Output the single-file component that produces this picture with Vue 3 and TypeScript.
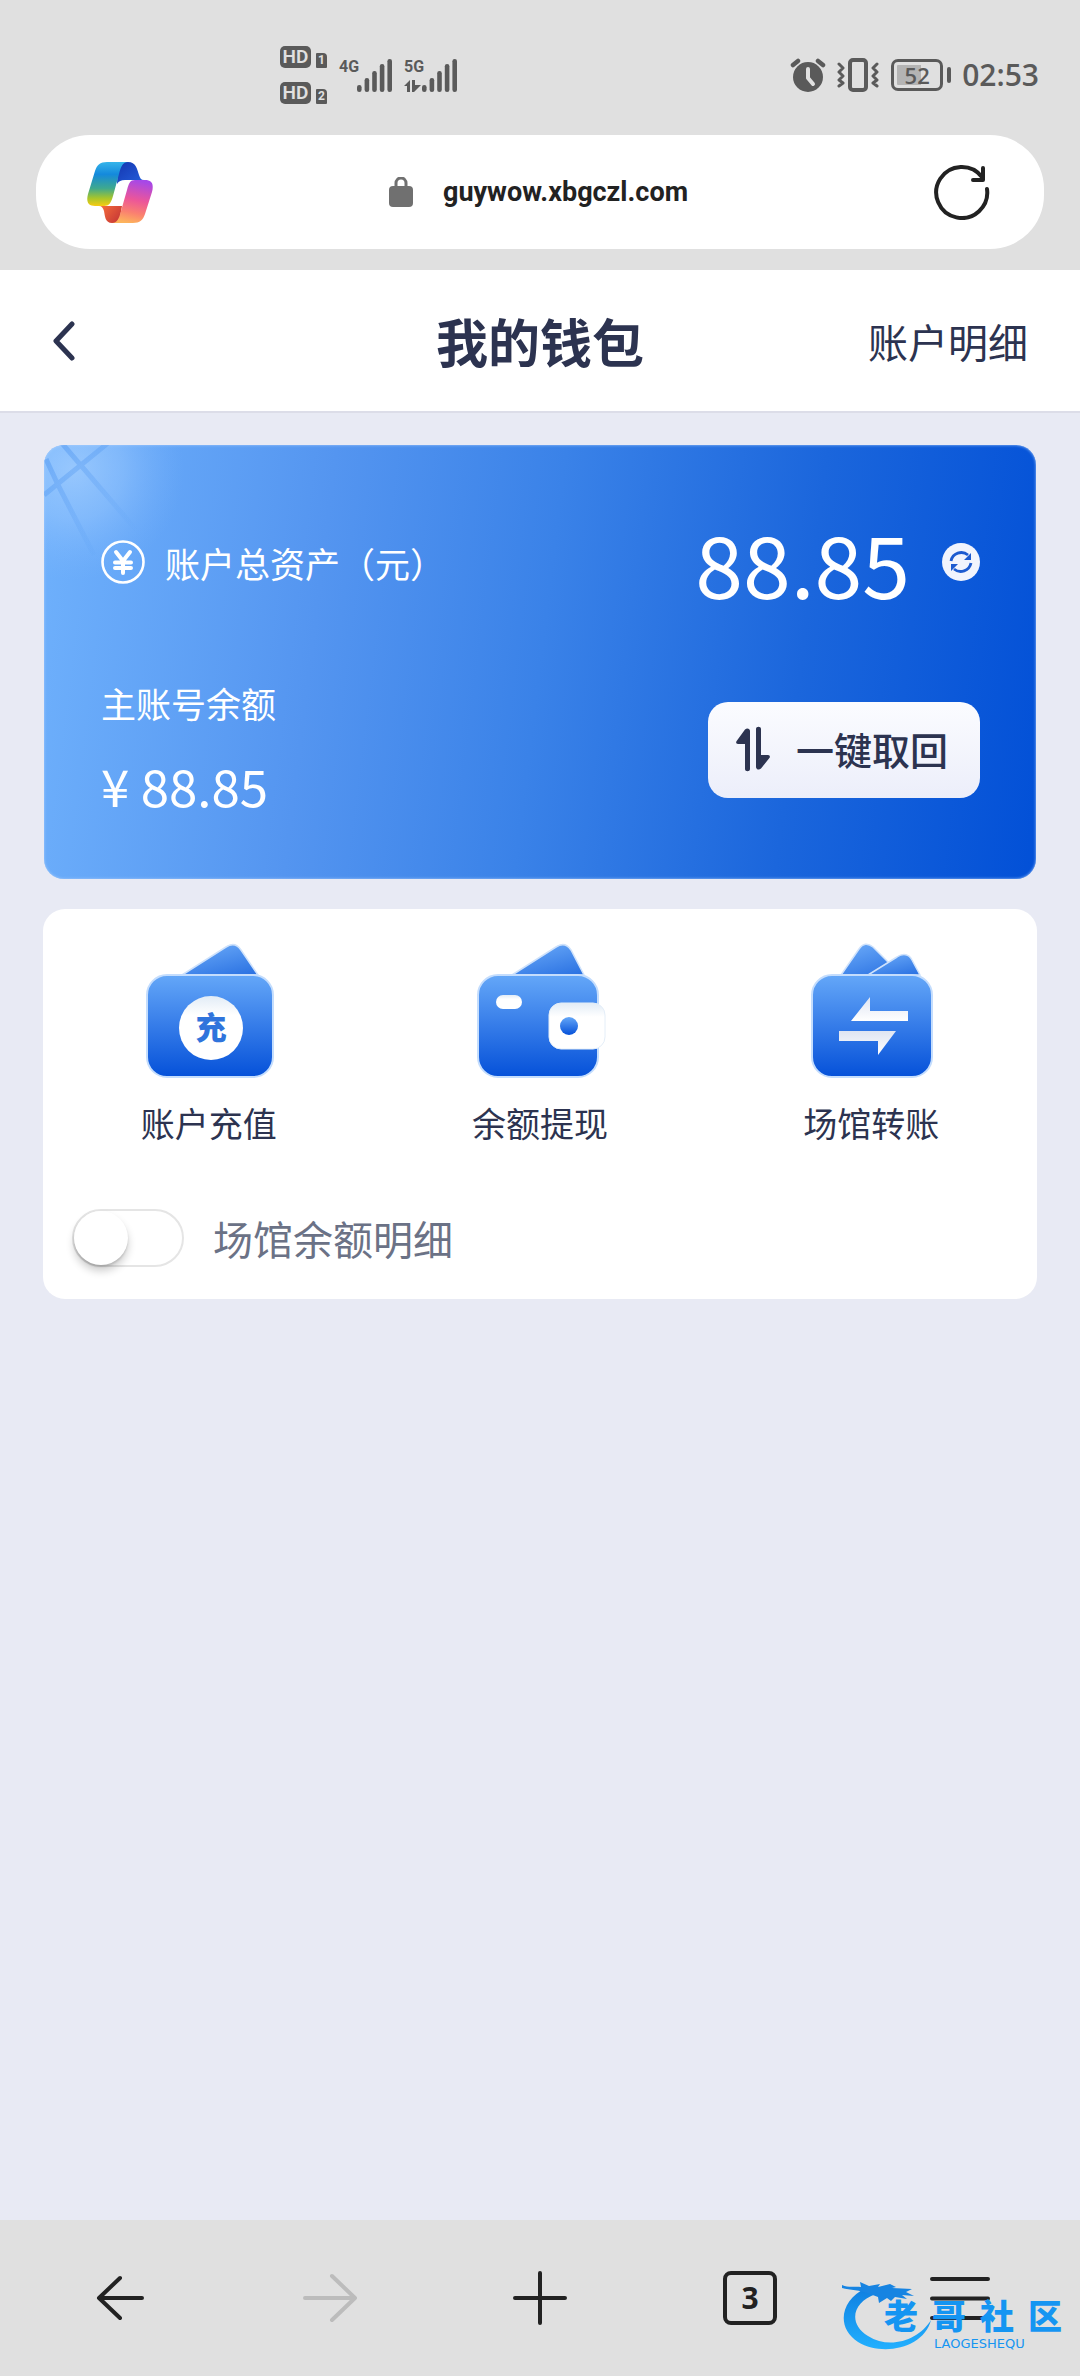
<script setup lang="ts">
import { ref } from 'vue'

interface SimCard {
  slot: number
  network: string
  data: boolean
}

const sims: SimCard[] = [
  { slot: 1, network: '4G', data: false },
  { slot: 2, network: '5G', data: true },
]

const bars = [7, 14, 21, 28, 33]
const address = ref('guywow.xbgczl.com')
const showVenues = ref(false)
const mark = ['老', '哥', '社', '区']
</script>

<template>
  <div class="screen">
    <div class="status">
      <div class="status-left">
        <div class="hd-list">
          <div v-for="sim in sims" :key="sim.slot" class="hd-row">
            <span class="hd">HD</span>
            <span class="slot">{{ sim.slot }}</span>
          </div>
        </div>
        <div v-for="sim in sims" :key="sim.network" class="signal">
          <div class="net">
            <span>{{ sim.network }}</span>
            <svg v-if="sim.data" width="17" height="12" viewBox="0 0 17 12">
              <path d="M0 6 6 0v12H3V6zM8 0h3v5h6l-7 7H8z" fill="#5a5a5a" />
            </svg>
          </div>
          <svg width="35" height="33" viewBox="0 0 35 33">
            <rect v-for="(h, i) in bars" :key="i" :x="i * 7.6" :y="33 - h" width="4.6" :height="h" rx="2.2" fill="#5a5a5a" />
          </svg>
        </div>
      </div>
      <div class="status-right">
        <svg width="36" height="34" viewBox="0 0 36 34" fill="none" stroke-linecap="round">
          <circle cx="18" cy="19" r="15" fill="#5a5a5a" />
          <path d="M3 7l5-4M33 7l-5-4" stroke="#5a5a5a" stroke-width="4.5" />
          <path d="M18 11v9l5 6" stroke="#e0e0e0" stroke-width="4" stroke-linejoin="round" />
        </svg>
        <svg class="vibrate" width="42" height="34" viewBox="0 0 42 34" fill="none" stroke="#5a5a5a" stroke-linecap="round" stroke-linejoin="round">
          <rect x="13" y="2" width="16" height="30" rx="3" stroke-width="4" />
          <path d="M2 6l4 4-4 4 4 4-4 4 4 3-4 3M40 6l-4 4 4 4-4 4 4 4-4 3 4 3" stroke-width="3" />
        </svg>
        <div class="battery">
          <span class="cell">52</span>
          <span class="cap"></span>
        </div>
        <span class="time">02:53</span>
      </div>
    </div>

    <div class="address">
      <button class="plain" type="button" aria-label="Copilot">
        <svg width="66" height="61" viewBox="0 0 66 61">
          <defs>
            <linearGradient id="ribbonCool" x1="0" y1="0" x2="0" y2="1">
              <stop offset="0" stop-color="#35b4ea" />
              <stop offset=".28" stop-color="#1489dc" />
              <stop offset=".6" stop-color="#3fa98e" />
              <stop offset=".82" stop-color="#a6c52c" />
              <stop offset="1" stop-color="#f7cb12" />
            </linearGradient>
            <linearGradient id="ribbonWarm" x1=".6" y1="0" x2=".4" y2="1">
              <stop offset="0" stop-color="#a648e8" />
              <stop offset=".45" stop-color="#ec5699" />
              <stop offset=".75" stop-color="#fa8070" />
              <stop offset="1" stop-color="#fdb45c" />
            </linearGradient>
            <linearGradient id="foldBlue" x1="0" y1="0" x2="1" y2="1">
              <stop offset="0" stop-color="#1436b0" />
              <stop offset="1" stop-color="#2560dc" />
            </linearGradient>
            <linearGradient id="foldOrange" x1="0" y1="0" x2="1" y2=".6">
              <stop offset="0" stop-color="#f8703c" />
              <stop offset="1" stop-color="#c93a36" />
            </linearGradient>
          </defs>
          <path d="M31 0h10c8 0 9 7 11 13 1 3 2 5 5 5H38c-4 0-6 1-8 4z" fill="url(#foldBlue)" />
          <path d="M32 61h-7c-7 0-7-7-8-12-1-3-2-5-5-5h23z" fill="url(#foldOrange)" />
          <path d="M20 0h21c-5 0-7 4-9 12l-6 22c-2 7-4 10-9 10H8c-7 0-9-4-7-12L8 9c2-6 5-9 12-9z" fill="url(#ribbonCool)" />
          <path d="M46 61H25c5 0 7-4 9-12l6-21c2-7 3-10 8-10h10c7 0 9 4 7 12l-7 22c-2 6-5 9-12 9z" fill="url(#ribbonWarm)" />
        </svg>
      </button>
      <label class="url">
        <svg width="24" height="30" viewBox="0 0 24 30">
          <rect y="9" width="24" height="21" rx="4" fill="#707070" />
          <path d="M7 10V6a5 5 0 0 1 10 0v4" fill="none" stroke="#707070" stroke-width="3" />
        </svg>
        <input v-model="address" type="text" aria-label="网址" />
      </label>
      <button class="plain reload" type="button" aria-label="刷新">
        <svg width="56" height="56" viewBox="0 0 56 56" fill="none" stroke="#222" stroke-width="4" stroke-linecap="round" stroke-linejoin="round">
          <path d="M53 25A25.500 25.500 0 1 1 48 13M49 4v12H39" />
        </svg>
      </button>
    </div>

    <header class="head">
      <button class="plain back" type="button" aria-label="返回">
        <svg width="24" height="40" viewBox="0 0 24 40" fill="none" stroke="#2c3350" stroke-width="5" stroke-linecap="round" stroke-linejoin="round">
          <path d="M20 3 4 20l16 17" />
        </svg>
      </button>
      <h1>我的钱包</h1>
      <a class="detail" href="#">账户明细</a>
    </header>

    <main class="body">
      <section class="card">
        <svg class="rays" width="180" height="140" viewBox="0 0 180 140" fill="none">
          <defs>
            <radialGradient id="glow" cx="30" cy="25" r="110" gradientUnits="userSpaceOnUse">
              <stop offset="0" stop-color="#b4d8ff" stop-opacity=".6" />
              <stop offset=".45" stop-color="#a4ceff" stop-opacity=".4" />
              <stop offset="1" stop-color="#82b8fc" stop-opacity="0" />
            </radialGradient>
            <linearGradient id="fade" x1="0" y1="0" x2="90" y2="90" gradientUnits="userSpaceOnUse">
              <stop offset="0" stop-color="#4c94f0" stop-opacity=".5" />
              <stop offset="1" stop-color="#4c94f0" stop-opacity="0" />
            </linearGradient>
          </defs>
          <rect width="180" height="140" fill="url(#glow)" />
          <path d="M0 50 64-2M16-4 100 94M2 14 14 40 50 110" stroke="url(#fade)" stroke-width="5" />
        </svg>
        <div class="row">
          <div class="total-label">
            <svg width="44" height="44" viewBox="0 0 44 44" fill="none" stroke="#fff" stroke-linecap="round" stroke-linejoin="round">
              <circle cx="22" cy="22" r="20.500" stroke-width="2.600" />
              <path d="M15 12l7 9 7-9M22 21v12M14 22.500h16M14 28h16" stroke-width="4" />
            </svg>
            <span>账户总资产（元）</span>
          </div>
          <div class="total">
            <strong>88.85</strong>
            <button class="plain" type="button" aria-label="刷新余额">
              <svg width="38" height="38" viewBox="0 0 38 38" fill="none">
                <circle cx="19" cy="19" r="19" fill="#f1f4fd" />
                <path d="M9 18a10.500 10.500 0 0 1 17-6M29 20a10.500 10.500 0 0 1-17 6" stroke="#1d5bd0" stroke-width="2.800" />
                <path d="M29 10v7h-7zM9 28v-7h7z" fill="#1d5bd0" />
              </svg>
            </button>
          </div>
        </div>
        <div class="row">
          <div class="main-balance">
            <span class="caption">主账号余额</span>
            <span class="amount">¥ 88.85</span>
          </div>
          <button class="collect" type="button">
            <svg width="34" height="46" viewBox="0 0 34 46" fill="#2c3350">
              <path d="M9 3.500c2-2 5-1 5 1.500v38c0 3-5 3-5 0V18H2c-2 0-2.500-2-1-3.500zM25 42.500c-2 2-5 1-5-1.500V3c0-3 5-3 5 0v26h7c2 0 2.500 2 1 3.500z" />
            </svg>
            <span>一键取回</span>
          </button>
        </div>
      </section>

      <section class="panel">
        <svg class="defs" width="0" height="0" aria-hidden="true">
          <defs>
            <linearGradient id="wallet" x1="0" y1="0" x2="0" y2="1">
              <stop offset="0" stop-color="#64a7f8" />
              <stop offset=".45" stop-color="#3a80ea" />
              <stop offset="1" stop-color="#0551d9" />
            </linearGradient>
            <linearGradient id="note" x1=".3" y1="0" x2=".9" y2="1">
              <stop offset="0" stop-color="#66a6f7" />
              <stop offset="1" stop-color="#2b72e2" />
            </linearGradient>
            <linearGradient id="pearl" x1="0" y1="0" x2="0" y2="1">
              <stop offset="0" stop-color="#e2ecf6" />
              <stop offset=".3" stop-color="#fff" />
            </linearGradient>
            <linearGradient id="steel" x1="0" y1="0" x2="0" y2="1">
              <stop offset="0" stop-color="#dfe5f2" />
              <stop offset="1" stop-color="#fff" />
            </linearGradient>
          </defs>
        </svg>
        <nav class="actions">
          <a href="#">
            <svg width="132" height="136" viewBox="0 0 132 136">
              <path d="M39 32 83 4c6-4 11-3 15 3l17 25z" fill="url(#note)" stroke="#cfe2fb" stroke-width="1.500" />
              <rect x="4" y="32" width="126" height="102" rx="20" fill="url(#wallet)" stroke="#c4ddfd" stroke-width="2" />
              <circle cx="68" cy="85" r="32" fill="url(#pearl)" />
              <text x="68" y="96" text-anchor="middle" class="glyph">充</text>
            </svg>
            <span>账户充值</span>
          </a>
          <a href="#">
            <svg width="132" height="136" viewBox="0 0 132 136">
              <path d="M38 32 82 4c6-4 11-3 15 3l13 25z" fill="url(#note)" stroke="#cfe2fb" stroke-width="1.500" />
              <rect x="4" y="32" width="120" height="102" rx="20" fill="url(#wallet)" stroke="#c4ddfd" stroke-width="2" />
              <rect x="22" y="52" width="26" height="14" rx="7" fill="url(#pearl)" />
              <rect x="75" y="60" width="56" height="46" rx="12" fill="url(#pearl)" stroke="#e4eef8" stroke-width="1" />
              <circle cx="95" cy="83" r="9" fill="url(#wallet)" />
            </svg>
            <span>余额提现</span>
          </a>
          <a href="#">
            <svg width="132" height="136" viewBox="0 0 132 136">
              <path d="M36 32 54 6c4-6 9-6 14-2l28 28z" fill="url(#note)" stroke="#cfe2fb" stroke-width="1.500" />
              <path d="M63 32 92 14c6-4 12-3 15 3l8 15z" fill="url(#note)" stroke="#cfe2fb" stroke-width="1.500" />
              <rect x="7" y="32" width="120" height="102" rx="20" fill="url(#wallet)" stroke="#c4ddfd" stroke-width="2" />
              <path d="M46 78 65 54v14h38v10z" fill="url(#steel)" />
              <path d="M34 88h57l-18 24V98H34z" fill="url(#steel)" />
            </svg>
            <span>场馆转账</span>
          </a>
        </nav>
        <label class="venues">
          <input v-model="showVenues" type="checkbox" />
          <span>场馆余额明细</span>
        </label>
      </section>
    </main>

    <footer class="browser">
      <button class="plain" type="button" aria-label="后退">
        <svg width="54" height="54" viewBox="0 0 54 54" class="stroke">
          <path d="M49 27H6M27 7 6 27l21 20" />
        </svg>
      </button>
      <button class="plain muted" type="button" aria-label="前进">
        <svg width="54" height="54" viewBox="0 0 54 54" class="stroke">
          <path d="M2 27h50M29 5l23 22-23 22" />
        </svg>
      </button>
      <button class="plain" type="button" aria-label="新建标签页">
        <svg width="54" height="54" viewBox="0 0 54 54" class="stroke">
          <path d="M2 27h50M27 2v50" />
        </svg>
      </button>
      <button class="plain tabs" type="button">3</button>
      <button class="plain" type="button" aria-label="菜单">
        <svg width="60" height="54" viewBox="0 0 60 54" class="stroke">
          <path d="M2 8h56M2 27.500h56M2 47h56" />
        </svg>
      </button>
      <div class="watermark">
        <svg width="94" height="70" viewBox="0 0 94 70">
          <defs>
            <linearGradient id="swoosh" x1="0" y1="0" x2="0" y2="1">
              <stop offset="0" stop-color="#0f7fe0" />
              <stop offset="1" stop-color="#22b0ff" />
            </linearGradient>
          </defs>
          <path d="M24 8C-2 20-6 48 16 62c25 15 66 6 73-22C77 60 48 70 26 56 6 44 10 22 34 14z" fill="url(#swoosh)" />
          <path d="M0 5c7 3 12 1 19 2l-1-5 9 4 11-2-2 3 12-3 6 3-4 1 20 1-6 3 8 4-12-1 5 4-12-2-4 4-4-3-8 5-1-6-8-3C18 10 8 10 0 8z" fill="#1784e2" />
        </svg>
        <div class="mark-text">
          <div class="mark-name"><span v-for="ch in mark" :key="ch">{{ ch }}</span></div>
          <div class="mark-sub">LAOGESHEQU</div>
        </div>
      </div>
    </footer>
  </div>
</template>

<style>
body {
  background: #e8eaf4;
}
</style>

<style scoped>
.screen {
  min-height: 100vh;
  display: flex;
  flex-direction: column;
  font-family: "Noto Sans CJK SC", sans-serif;
  color: #2c3350;
}

.screen *,
.screen *::before {
  box-sizing: border-box;
}

svg {
  display: block;
  flex: none;
}

.plain {
  border: 0;
  padding: 0;
  margin: 0;
  background: none;
  color: inherit;
  font: inherit;
}

a {
  color: inherit;
  text-decoration: none;
}

/* system status bar */
.status {
  height: 135px;
  padding: 15px 41px 0 280px;
  display: flex;
  justify-content: space-between;
  align-items: center;
  background: #e0e0e0;
  color: #5a5a5a;
}

.status-left,
.status-right {
  display: flex;
  align-items: center;
}

.status-left {
  gap: 12px;
}

.hd-list {
  display: flex;
  flex-direction: column;
  gap: 14px;
}

.hd-row {
  display: flex;
  align-items: flex-end;
  gap: 5px;
}

.hd {
  width: 31px;
  height: 22px;
  border-radius: 5px;
  background: #5a5a5a;
  color: #e0e0e0;
  font: 600 19px/22px Roboto, sans-serif;
  text-align: center;
}

.slot {
  width: 11px;
  height: 15px;
  border-radius: 1px 4px 1px 1px;
  background: #5a5a5a;
  color: #e0e0e0;
  font: 700 12px/15px Roboto, sans-serif;
  text-align: center;
}

.signal {
  height: 33px;
  display: flex;
}

.net {
  width: 18px;
  display: flex;
  flex-direction: column;
  gap: 5px;
  font: 700 16px/16px Roboto, sans-serif;
}

.status-right {
  height: 34px;
}

.vibrate {
  margin: 0 12px 0 11px;
}

.battery {
  display: flex;
  align-items: center;
  gap: 4px;
}

.cell {
  width: 52px;
  height: 32px;
  border: 3px solid #5a5a5a;
  border-radius: 7px;
  background: linear-gradient(90deg, #b4b4b4 60%, #e0e0e0 60%) content-box;
  padding: 3px;
  font: 600 22px/20px "Open Sans", sans-serif;
  text-align: center;
}

.cap {
  width: 4px;
  height: 16px;
  border-radius: 2px;
  background: #5a5a5a;
}

.time {
  margin-left: 11px;
  font: 600 30px/34px "Open Sans", sans-serif;
}

/* address bar */
.address {
  height: 114px;
  margin: 0 36px 21px;
  padding: 0 54px 0 51px;
  display: grid;
  grid-template-columns: 1fr auto 1fr;
  align-items: center;
  border-radius: 54px;
  background: #fff;
  box-shadow: 0 0 0 100vmax #e0e0e0;
  clip-path: inset(0 -36px -21px);
}

.url {
  display: flex;
  align-items: center;
  gap: 30px;
}

.url input {
  field-sizing: content;
  border: 0;
  padding: 0;
  outline: 0;
  background: none;
  color: #222;
  font: 700 27px/36px Roboto, sans-serif;
}

.reload {
  justify-self: end;
}

/* page header */
.head {
  height: 143px;
  padding: 0 52px;
  display: grid;
  grid-template-columns: 1fr auto 1fr;
  align-items: center;
  background: #fff;
  border-bottom: 2px solid #dcdde8;
}

.back {
  justify-self: start;
}

.head h1 {
  margin: 0;
  font-size: 52px;
  line-height: 76px;
  font-weight: 700;
}

.detail {
  justify-self: end;
  font-size: 40px;
  line-height: 60px;
}

.body {
  flex: 1;
  padding: 32px 43px 0;
}

/* balance card */
.card {
  position: relative;
  height: 434px;
  margin: 0 1px;
  padding: 72px 56px 0 57px;
  border-radius: 20px;
  overflow: hidden;
  background: linear-gradient(97deg, #6fb1fc 0%, #5495f0 28%, #3a82e8 50%, #1b66dc 75%, #0250d7 100%);
  box-shadow: inset 0 0 3px #a9cdfb;
  color: #fff;
}

.rays {
  position: absolute;
  left: 0;
  top: 0;
}

.row {
  position: relative;
  display: flex;
  justify-content: space-between;
}

.total-label {
  height: 90px;
  display: flex;
  align-items: center;
  gap: 20px;
  font-size: 35px;
}

.total {
  height: 90px;
  display: flex;
  align-items: center;
  gap: 32px;
}

.total strong {
  font-size: 86px;
  line-height: 90px;
  font-weight: 400;
}

.main-balance {
  margin-top: 66px;
  display: flex;
  flex-direction: column;
  gap: 14px;
}

.caption {
  font-size: 35px;
  line-height: 60px;
}

.amount {
  font-size: 51px;
  line-height: 76px;
}

.collect {
  width: 272px;
  height: 96px;
  margin-top: 95px;
  padding: 0 4px 2px 0;
  border: 0;
  border-radius: 20px;
  display: flex;
  align-items: center;
  justify-content: center;
  gap: 26px;
  background: linear-gradient(#fbfcff, #eceefa);
  color: #2c3350;
  font: 500 38px/56px "Noto Sans CJK SC", sans-serif;
}

/* actions */
.panel {
  margin-top: 30px;
  padding: 34px 0 32px;
  border-radius: 22px;
  background: #fff;
}

.defs {
  position: absolute;
}

.actions {
  display: grid;
  grid-template-columns: repeat(3, 1fr);
}

.actions a {
  display: flex;
  flex-direction: column;
  align-items: center;
  gap: 18px;
  font-size: 34px;
  line-height: 52px;
}

.glyph {
  font-size: 31px;
  font-weight: 900;
  fill: #2f74dc;
}

.venues {
  margin: 60px 0 0 29px;
  display: flex;
  align-items: center;
  gap: 29px;
  width: max-content;
  color: #6b7286;
  font-size: 40px;
  line-height: 58px;
}

.venues input {
  appearance: none;
  margin: 0;
  width: 112px;
  height: 58px;
  border: 2px solid #e5e5e5;
  border-radius: 29px;
  background: #fff;
}

.venues input::before {
  content: "";
  display: block;
  width: 54px;
  height: 54px;
  border-radius: 50%;
  background: #fff;
  box-shadow: 0 6px 8px rgba(0, 0, 0, 0.2), 0 2px 2px rgba(0, 0, 0, 0.12);
}

.venues input:checked {
  background: #3a82e8;
}

.venues input:checked::before {
  margin-left: 54px;
}

/* browser toolbar */
.browser {
  position: relative;
  height: 156px;
  padding: 0 15px;
  display: grid;
  grid-template-columns: repeat(5, 1fr);
  align-items: center;
  justify-items: center;
  background: #e0e0e0;
  color: #222;
}

.stroke {
  fill: none;
  stroke: currentColor;
  stroke-width: 4;
  stroke-linecap: round;
  stroke-linejoin: round;
}

.muted {
  color: #bcbcbc;
}

.tabs {
  width: 54px;
  height: 54px;
  border: 4px solid #222;
  border-radius: 8px;
  font: 700 30px/44px "Noto Sans", sans-serif;
}

.watermark {
  position: absolute;
  right: 18px;
  bottom: 26px;
  width: 220px;
  height: 70px;
  color: #1595f2;
}

.watermark svg {
  position: absolute;
  left: 0;
  top: 0;
}

.mark-text {
  padding: 18px 0 0 42px;
}

.mark-name {
  display: flex;
  justify-content: space-between;
  font-size: 34px;
  line-height: 34px;
  font-weight: 900;
}

.mark-sub {
  padding: 5px 0 0 50px;
  font: 13px/14px "DejaVu Sans", sans-serif;
}
</style>
